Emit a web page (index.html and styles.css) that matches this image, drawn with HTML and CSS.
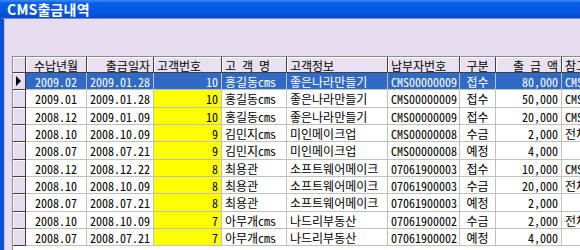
FILE: index.html
```html
<!DOCTYPE html>
<html lang="ko">
<head>
<meta charset="utf-8">
<title>CMS출금내역</title>
<link rel="stylesheet" href="styles.css">
</head>
<body>
<div class="window">
  <div class="titlebar">CMS출금내역</div>
  <div class="frame">
    <div class="client">
      <div class="grid">
        <div class="hd ind"></div>
        <div class="hd c">수납년월</div>
        <div class="hd r">출금일자</div>
        <div class="hd l">고객번호</div>
        <div class="hd l">고 객 명</div>
        <div class="hd l">고객정보</div>
        <div class="hd l">납부자번호</div>
        <div class="hd c">구분</div>
        <div class="hd r">출 금 액</div>
        <div class="hd l">참고</div>

        <div class="ind cur"><span class="arrow"></span></div>
        <div class="cell c sel">2009.02</div><div class="cell c sel">2009.01.28</div><div class="cell r sel">10</div><div class="cell l sel">홍길동cms</div><div class="cell l sel">좋은나라만들기</div><div class="cell l sel">CMS00000009</div><div class="cell c sel">접수</div><div class="cell r sel">80,000</div><div class="cell l sel">CMS</div>

        <div class="ind"></div>
        <div class="cell c">2009.01</div><div class="cell c">2009.01.28</div><div class="cell r yel">10</div><div class="cell l">홍길동cms</div><div class="cell l">좋은나라만들기</div><div class="cell l">CMS00000009</div><div class="cell c">접수</div><div class="cell r">50,000</div><div class="cell l">CMS</div>

        <div class="ind"></div>
        <div class="cell c">2008.12</div><div class="cell c">2009.01.09</div><div class="cell r yel">10</div><div class="cell l">홍길동cms</div><div class="cell l">좋은나라만들기</div><div class="cell l">CMS00000009</div><div class="cell c">접수</div><div class="cell r">20,000</div><div class="cell l">CMS</div>

        <div class="ind"></div>
        <div class="cell c">2008.10</div><div class="cell c">2008.10.09</div><div class="cell r yel">9</div><div class="cell l">김민지cms</div><div class="cell l">미인메이크업</div><div class="cell l">CMS00000008</div><div class="cell c">수금</div><div class="cell r">2,000</div><div class="cell l">전체</div>

        <div class="ind"></div>
        <div class="cell c">2008.07</div><div class="cell c">2008.07.21</div><div class="cell r yel">9</div><div class="cell l">김민지cms</div><div class="cell l">미인메이크업</div><div class="cell l">CMS00000008</div><div class="cell c">예정</div><div class="cell r">4,000</div><div class="cell l"></div>

        <div class="ind"></div>
        <div class="cell c">2008.12</div><div class="cell c">2008.12.22</div><div class="cell r yel">8</div><div class="cell l">최용관</div><div class="cell l">소프트웨어메이크</div><div class="cell l">07061900003</div><div class="cell c">접수</div><div class="cell r">10,000</div><div class="cell l">CMS</div>

        <div class="ind"></div>
        <div class="cell c">2008.10</div><div class="cell c">2008.10.09</div><div class="cell r yel">8</div><div class="cell l">최용관</div><div class="cell l">소프트웨어메이크</div><div class="cell l">07061900003</div><div class="cell c">수금</div><div class="cell r">20,000</div><div class="cell l">전체</div>

        <div class="ind"></div>
        <div class="cell c">2008.07</div><div class="cell c">2008.07.21</div><div class="cell r yel">8</div><div class="cell l">최용관</div><div class="cell l">소프트웨어메이크</div><div class="cell l">07061900003</div><div class="cell c">예정</div><div class="cell r">2,000</div><div class="cell l"></div>

        <div class="ind"></div>
        <div class="cell c">2008.10</div><div class="cell c">2008.10.09</div><div class="cell r yel">7</div><div class="cell l">아무개cms</div><div class="cell l">나드리부동산</div><div class="cell l">07061900002</div><div class="cell c">수금</div><div class="cell r">2,000</div><div class="cell l">전체</div>

        <div class="ind"></div>
        <div class="cell c">2008.07</div><div class="cell c">2008.07.21</div><div class="cell r yel">7</div><div class="cell l">아무개cms</div><div class="cell l">나드리부동산</div><div class="cell l">07061900002</div><div class="cell c">예정</div><div class="cell r">4,000</div><div class="cell l"></div>
      </div>
    </div>
  </div>
</div>
</body>
</html>
```

FILE: styles.css
```css
html, body {
  margin: 0;
  padding: 0;
  width: 580px;
  height: 250px;
  overflow: hidden;
  background: #e8dcf0;
}

.window {
  display: flex;
  flex-direction: column;
  height: 250px;
}

.titlebar {
  height: 18px;
  box-sizing: border-box;
  padding: 0 0 0 7px;
  background: linear-gradient(#3c8cf8 0px, #0a5ee6 3px, #0656e0 12px, #0448cc 18px);
  color: #ffffff;
  font-family: "Noto Sans CJK KR", "DejaVu Sans", sans-serif;
  font-weight: bold;
  font-size: 14px;
  line-height: 18px;
  letter-spacing: 0.2px;
}

.frame {
  flex: 1;
  display: flex;
  border-left: 4px solid #0a4fd6;
  border-top: 1px solid #6f8fd8;
}

.client {
  flex: 1;
  background: #e8dcf0;
  border-left: 1px solid #c9c0e8;
  padding: 37px 0 0 7px;
  overflow: hidden;
}

.grid {
  display: grid;
  grid-template-columns: 13px 61px 67px 68px 65px 101px 72px 36px 66px 80px;
  grid-template-rows: 16px repeat(11, 17.35px);
  width: 629px;
  background: #ffffff;
  border-left: 1px solid #8c8c8c;
  border-top: 1px solid #8c8c8c;
  font-family: "Noto Sans Mono CJK KR", "Noto Sans CJK KR", "DejaVu Sans Mono", monospace;
  font-size: 12px;
  color: #000000;
}

.hd {
  box-sizing: border-box;
  background: #e9e0f1;
  border-right: 1px solid #404040;
  border-bottom: 1px solid #404040;
  box-shadow: inset 1px 1px 0 #ffffff;
  line-height: 15px;
  padding: 1px 3px 0;
  white-space: nowrap;
  overflow: hidden;
}

.ind {
  box-sizing: border-box;
  background: #e6dbef;
  border-right: 1px solid #404040;
  border-bottom: 1px solid #404040;
  box-shadow: inset 1px 1px 0 #ffffff;
  display: flex;
  align-items: center;
  padding-left: 3px;
}

.arrow {
  width: 0;
  height: 0;
  border-top: 5px solid transparent;
  border-bottom: 5px solid transparent;
  border-left: 5px solid #000000;
}

.cell {
  box-sizing: border-box;
  border-right: 1px solid #c0c0c0;
  border-bottom: 1px solid #c0c0c0;
  line-height: 16px;
  padding: 1px 3px 0;
  white-space: nowrap;
  overflow: hidden;
}

.c { text-align: center; }
.r { text-align: right; }
.l { text-align: left; }

.yel { background: #ffff00; }

.sel {
  background: #316ac5;
  color: #ffffff;
}
```
